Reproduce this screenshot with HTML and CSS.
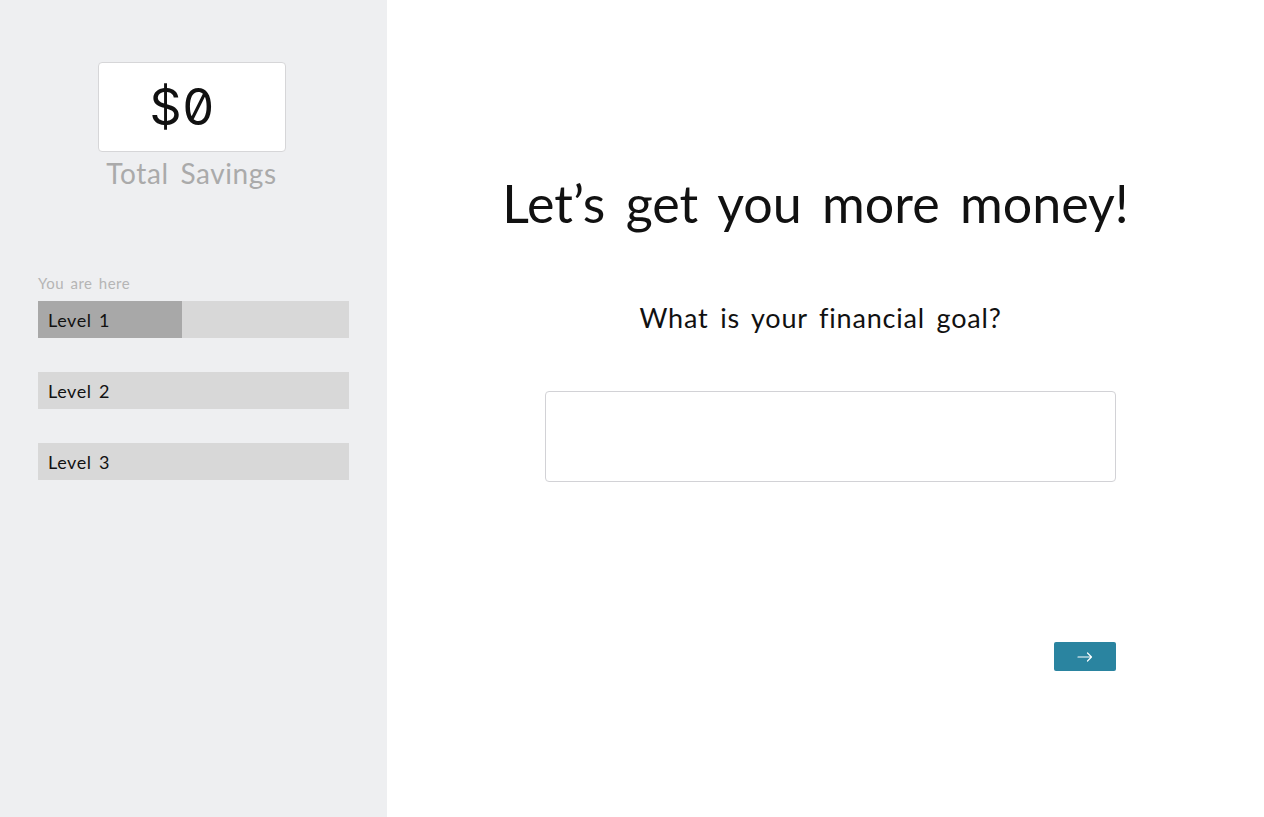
FILE: index.html
```html
<!DOCTYPE html>
<html>
<head>
<meta charset="utf-8">
<link rel="stylesheet" href="styles.css">
</head>
<body>
<div class="app">
  <aside class="sidebar">
    <div class="savings">
      <div class="savings-box"><span class="amount">$0</span></div>
      <div class="savings-label">Total Savings</div>
    </div>
    <div class="levels">
      <div class="here">You are here</div>
      <div class="level"><div class="fill" style="width:144px"></div><span class="level-text">Level 1</span></div>
      <div class="level"><span class="level-text">Level 2</span></div>
      <div class="level"><span class="level-text">Level 3</span></div>
    </div>
  </aside>
  <main class="main">
    <h1 class="title">Let’s get you more money!</h1>
    <h2 class="question">What is your financial goal?</h2>
    <div class="form">
      <textarea class="answer"></textarea>
      <div class="actions">
        <button class="next"><svg width="16" height="10" viewBox="0 0 16 10"><path d="M1 5H14.5M10.5 1L14.5 5L10.5 9" fill="none" stroke="#fff" stroke-width="1.2" stroke-linecap="round" stroke-linejoin="round"/></svg></button>
      </div>
    </div>
  </main>
</div>
</body>
</html>
```
FILE: styles.css
```css
* { box-sizing: border-box; }
html, body { margin: 0; padding: 0; }
body {
  font-family: "Lato", "Noto Sans", sans-serif;
  color: #111;
}
.app {
  display: flex;
  width: 1264px;
  height: 817px;
}
.sidebar {
  width: 387px;
  flex: none;
  background: #eeeff1;
  padding: 62px 38px 0 38px;
}
.savings {
  display: flex;
  flex-direction: column;
  align-items: center;
  width: 307px;
}
.savings-box {
  width: 188px;
  height: 90px;
  background: #fff;
  border: 1px solid #d6d6d8;
  border-radius: 4px;
  display: flex;
  align-items: center;
  padding-left: 51px;
}
.amount {
  font-family: "Inter", sans-serif;
  font-feature-settings: "zero" 1;
  font-size: 50px;
  font-weight: 400;
  color: #111;
  letter-spacing: 1px;
}
.savings-label {
  margin-top: 4px;
  font-size: 28px;
  color: #aaaaaa;
  letter-spacing: 0.6px;
  word-spacing: 4px;
}
.levels {
  margin-top: 84px;
  display: flex;
  flex-direction: column;
}
.here {
  font-size: 15px;
  color: #b5b5b5;
  letter-spacing: 0.5px;
  word-spacing: 2px;
  height: 17px;
  margin-bottom: 10px;
}
.level {
  position: relative;
  width: 311px;
  height: 37px;
  background: #d8d8d8;
  margin-bottom: 34px;
  display: flex;
  align-items: center;
  padding-left: 10px;
}
.fill {
  position: absolute;
  left: 0;
  top: 0;
  bottom: 0;
  background: #a8a8a8;
}
.level-text {
  position: relative;
  font-size: 18px;
  letter-spacing: 0.6px;
  word-spacing: 2px;
  color: #111;
}
.main {
  flex: 1;
  display: flex;
  flex-direction: column;
  align-items: center;
  padding-top: 170px;
}
.title {
  margin: 0 20px 0 0;
  font-weight: 400;
  font-size: 52px;
  letter-spacing: 0;
  word-spacing: 7px;
  line-height: 66px;
}
.question {
  margin: 64px 10px 0 0;
  font-weight: 400;
  font-size: 27px;
  letter-spacing: 0.8px;
  word-spacing: 4px;
  line-height: 36px;
}
.form {
  margin-top: 55px;
  margin-left: 10px;
  width: 571px;
  display: flex;
  flex-direction: column;
  align-items: flex-end;
}
.answer {
  width: 571px;
  height: 91px;
  border: 1px solid #d2d2d6;
  border-radius: 4px;
  resize: none;
  outline: none;
  font: inherit;
}
.actions {
  margin-top: 160px;
}
.next {
  width: 62px;
  height: 29px;
  background: #2a84a0;
  border: none;
  border-radius: 2px;
  display: flex;
  align-items: center;
  justify-content: center;
  padding: 0;
}
```
